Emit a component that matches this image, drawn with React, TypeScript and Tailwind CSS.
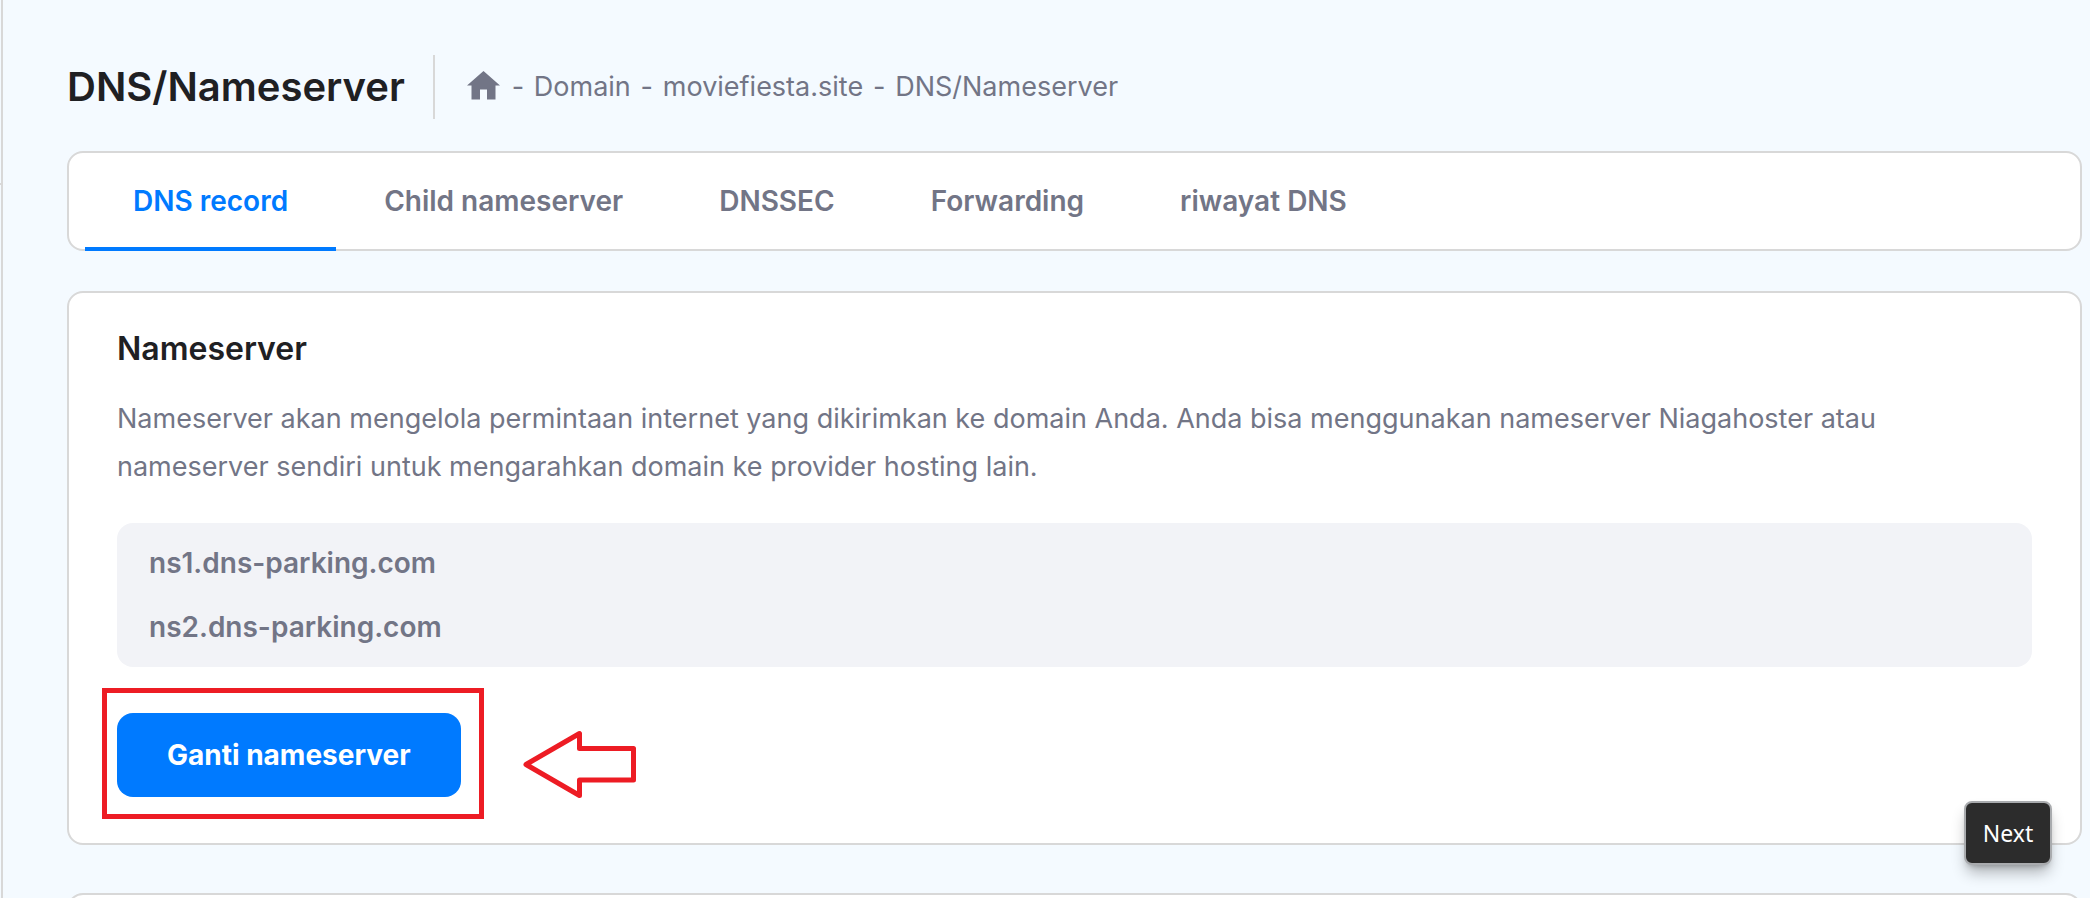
import React from "react";

const crumbs = ["Domain", "moviefiesta.site", "DNS/Nameserver"];
const tabs = ["DNS record", "Child nameserver", "DNSSEC", "Forwarding", "riwayat DNS"];
const nameservers = ["ns1.dns-parking.com", "ns2.dns-parking.com"];

function HomeIcon() {
  return (
    <svg viewBox="0 0 33 29" className="h-[29px] w-[33px] shrink-0" fill="currentColor" aria-hidden="true">
      <path d="M16.500 0 33 14.500h-4.500v14h-8.500V18.500h-7v10h-8.500v-14H0z" />
    </svg>
  );
}

function PointerArrow() {
  return (
    <svg
      viewBox="0 0 114 70"
      className="pointer-events-none absolute left-[405px] top-[17px] h-[70px] w-[114px]"
      fill="none"
      stroke="#ed1c24"
      strokeWidth="5"
      strokeLinejoin="round"
      aria-hidden="true"
    >
      <path d="M4 34.500 57.500 3.500V18.500H111.500V50H57.500V65.500z" />
    </svg>
  );
}

export default function App() {
  return (
    <div className="relative flex h-screen overflow-hidden bg-[#f4faff] font-['Inter',sans-serif] text-[#727586]">
      <div className="w-[3px] shrink-0 border-r-2 border-[#d8d8d8]">
        <div className="mt-[183px] h-0.5 bg-[#d8d8d8]" />
      </div>
      <main className="flex min-w-0 flex-1 flex-col pl-16 pr-2 pt-[55px]">
        <header className="flex h-16 shrink-0 items-center">
          <h1 className="text-[40px] font-semibold leading-[48px] text-[#1f2023]">DNS/Nameserver</h1>
          <nav
            aria-label="Breadcrumb"
            className="ml-7 flex h-16 items-center border-l-2 border-[#d8d8d8] pl-8 text-[27px]"
          >
            <a href="#home" aria-label="Home" className="mr-0.5 pb-1">
              <HomeIcon />
            </a>
            <ol className="flex">
              {crumbs.map((crumb) => (
                <li key={crumb} className="flex">
                  <span className="w-8 text-center">-</span>
                  <span>{crumb}</span>
                </li>
              ))}
            </ol>
          </nav>
        </header>

        <div role="tablist" className="mt-8 flex h-[100px] shrink-0 rounded-2xl border-2 border-[#d8d8d8] bg-white pl-4">
          {tabs.map((tab, i) => (
            <button
              key={tab}
              type="button"
              role="tab"
              aria-selected={i === 0}
              className={
                i === 0
                  ? "-mb-0.5 border-b-4 border-[#007aff] px-12 pt-0.5 text-[28px] font-semibold text-[#007aff]"
                  : "px-12 text-[28px] font-semibold"
              }
            >
              {tab}
            </button>
          ))}
        </div>

        <section className="mt-10 shrink-0 rounded-2xl border-2 border-[#d8d8d8] bg-white px-12 pb-[46px] pt-8">
          <h2 className="text-[32px] font-semibold leading-[48px] text-[#1f2023]">Nameserver</h2>
          <p className="mt-[22px] text-[27px] leading-[48px]">
            Nameserver akan mengelola permintaan internet yang dikirimkan ke domain Anda. Anda bisa menggunakan
            nameserver Niagahoster atau nameserver sendiri untuk mengarahkan domain ke provider hosting lain.
          </p>
          <ul className="mt-8 rounded-2xl bg-[#f2f3f7] px-8 py-2 text-[28px] font-semibold">
            {nameservers.map((ns) => (
              <li key={ns} className="flex h-16 items-center">
                {ns}
              </li>
            ))}
          </ul>
          <div className="relative mt-[46px] flex">
            <button type="button" className="h-[84px] rounded-2xl bg-[#007aff] px-[50px] text-[28px] font-bold text-white">
              Ganti nameserver
            </button>
            <div className="pointer-events-none absolute -top-[25px] -left-[15px] h-[131px] w-[382px] border-[5px] border-[#ed1c24]" />
            <PointerArrow />
          </div>
        </section>

        <section className="mt-12 h-16 shrink-0 rounded-2xl border-2 border-[#d8d8d8] bg-white" />
      </main>
      <div
        role="tooltip"
        className="absolute right-[38px] bottom-[33px] flex h-16 w-[88px] items-center justify-center rounded-lg border-2 border-[#a9abae] bg-[#2c2c2c] font-['Noto_Sans',sans-serif] text-[23px] text-white shadow-lg shadow-black/30"
      >
        Next
      </div>
    </div>
  );
}
